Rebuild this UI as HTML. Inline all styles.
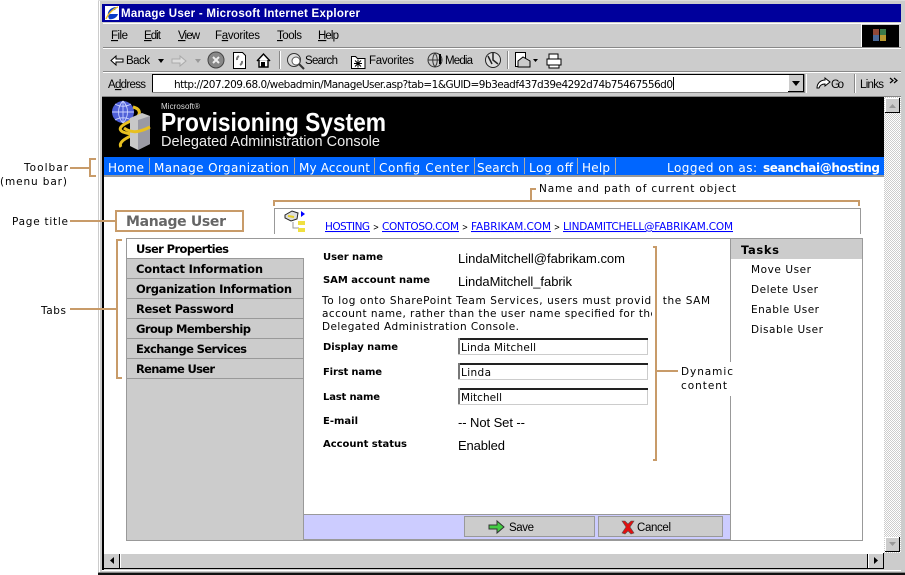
<!DOCTYPE html>
<html><head><meta charset="utf-8"><title>Manage User - Microsoft Internet Explorer</title>
<style>
html,body{margin:0;padding:0;background:#fff;width:905px;height:575px;overflow:hidden}
svg{display:block}
text{white-space:pre}
.l{font-family:"Liberation Sans",sans-serif;font-size:11.5px;fill:#000}
.d{font-family:"DejaVu Sans",sans-serif;font-size:10.5px;fill:#000}
.b{font-family:"DejaVu Sans",sans-serif;font-size:11.5px;font-weight:bold;fill:#000}
.s{font-family:"DejaVu Sans",sans-serif;font-size:10px;font-weight:bold;fill:#000}
.v{font-family:"Liberation Sans",sans-serif;font-size:13px;fill:#000}
.m{font-family:"DejaVu Sans",sans-serif;font-size:12px;fill:#fff}
.a{font-family:"DejaVu Sans",sans-serif;font-size:10.5px;fill:#00f;text-decoration:underline}
.r{shape-rendering:crispEdges}
</style></head><body>
<svg width="905" height="575" viewBox="0 0 905 575" xmlns="http://www.w3.org/2000/svg">
<defs><pattern id="dith" width="2" height="2" patternUnits="userSpaceOnUse"><rect width="2" height="2" fill="#fff"/><rect width="1" height="1" fill="#ccc"/><rect x="1" y="1" width="1" height="1" fill="#ccc"/></pattern></defs>
<g class="r">
<rect x="98" y="0" width="807" height="575" fill="#ccc"/>
<rect x="98" y="0" width="807" height="1" fill="#ddd"/>
<rect x="99" y="1" width="1" height="572" fill="#fff"/>
<rect x="102" y="4" width="799" height="18" fill="#00009c"/>
<rect x="103" y="23" width="798" height="1" fill="#fff"/>
<rect x="103" y="47" width="798" height="1" fill="#888"/><rect x="103" y="48" width="798" height="1" fill="#fff"/>
<rect x="103" y="71" width="798" height="1" fill="#888"/><rect x="103" y="72" width="798" height="1" fill="#fff"/>
<rect x="861" y="24" width="1" height="23" fill="#fff"/>
<rect x="862" y="25" width="37" height="22" fill="#000"/>
<rect x="279" y="51" width="1" height="18" fill="#888"/><rect x="280" y="51" width="1" height="18" fill="#fff"/>
<rect x="507" y="51" width="1" height="18" fill="#888"/><rect x="508" y="51" width="1" height="18" fill="#fff"/>
<rect x="152" y="74" width="653" height="19" fill="#fff"/>
<rect x="152" y="74" width="653" height="1" fill="#000"/><rect x="152" y="74" width="1" height="19" fill="#000"/>
<rect x="804" y="74" width="1" height="19" fill="#888"/><rect x="152" y="92" width="653" height="1" fill="#888"/>
<rect x="788" y="75" width="16" height="17" fill="#ccc"/><rect x="788" y="75" width="1" height="17" fill="#fff"/><rect x="803" y="75" width="1" height="17" fill="#000"/><rect x="788" y="91" width="16" height="1" fill="#000"/>
<rect x="673" y="77" width="1" height="13" fill="#000"/>
<rect x="806" y="74" width="1" height="19" fill="#fff"/><rect x="854" y="74" width="1" height="19" fill="#888"/><rect x="855" y="74" width="1" height="19" fill="#fff"/>
<rect x="102" y="96" width="799" height="1" fill="#888"/>
<rect x="102" y="97" width="2" height="473" fill="#000"/>
<rect x="102" y="97" width="782" height="60" fill="#000"/>
<rect x="104" y="157" width="780" height="18" fill="#0066ff"/>
<rect x="104" y="175" width="780" height="2" fill="#999"/>
<rect x="104" y="177" width="780" height="376" fill="#fff"/>
</g>
<g class="r" fill="#aaa">
<rect x="149" y="158" width="1" height="16"/><rect x="294" y="158" width="1" height="16"/><rect x="374" y="158" width="1" height="16"/><rect x="474" y="158" width="1" height="16"/><rect x="524" y="158" width="1" height="16"/><rect x="577" y="158" width="1" height="16"/><rect x="615" y="158" width="1" height="16"/>
</g>
<!-- Title bar -->
<rect x="105" y="6" width="14" height="14" fill="#fff" class="r"/>
<path d="M108 16c-1-5 3-9 9-9l-2 3c-3 0-5 2-5 4h8c-1 4-6 6-9 5z" fill="#0a3cc8"/>
<path d="M106 19c2-5 7-10 12-12" stroke="#f0c020" stroke-width="1.4" fill="none"/>
<text class="l" x="121" y="17" style="font-weight:bold;fill:#fff;font-size:11.5px" textLength="239" lengthAdjust="spacing">Manage User - Microsoft Internet Explorer</text>
<!-- menu -->
<text class="l" x="111" y="39" textLength="17"><tspan text-decoration="underline">F</tspan>ile</text>
<text class="l" x="144" y="39" textLength="17"><tspan text-decoration="underline">E</tspan>dit</text>
<text class="l" x="178" y="39" textLength="22"><tspan text-decoration="underline">V</tspan>iew</text>
<text class="l" x="215" y="39" textLength="45">F<tspan text-decoration="underline">a</tspan>vorites</text>
<text class="l" x="277" y="39" textLength="25"><tspan text-decoration="underline">T</tspan>ools</text>
<text class="l" x="318" y="39" textLength="21"><tspan text-decoration="underline">H</tspan>elp</text>
<!-- win logo -->
<g class="r"><rect x="873" y="29" width="6" height="6" fill="#904838"/><rect x="880" y="29" width="6" height="6" fill="#3a7a4a"/><rect x="873" y="35" width="6" height="6" fill="#4a6898"/><rect x="880" y="35" width="6" height="6" fill="#b89830"/></g>
<!-- toolbar icons -->
<path d="M111 60.500l5-4.500v3h7v3h-7v3z" fill="#fff" stroke="#000"/>
<text class="l" x="126" y="64" textLength="24">Back</text>
<path d="M158 59h6l-3 4z" fill="#000"/>
<path d="M172 59h8v-3l6 5-6 5v-3h-8z" fill="#ddd" stroke="#aaa"/>
<path d="M195 59h6l-3 4z" fill="#999"/>
<circle cx="216" cy="60" r="8" fill="#888" stroke="#444"/>
<path d="M213 57l6 6m0-6l-6 6" stroke="#eee" stroke-width="2"/>
<path d="M233.500 52.500h9l3 3v13h-12z" fill="#fff" stroke="#000"/>
<path d="M239 56a4 4 0 0 0-2 4m3 5a4 4 0 0 0 2-4" stroke="#777" stroke-width="2" fill="none"/>
<path d="M257 61l6.500-7 6.500 7m-11-1v7h9v-7" fill="#fff" stroke="#000" stroke-width="1.400"/>
<rect x="261" y="62" width="4" height="5" fill="#000"/>
<circle cx="294" cy="60" r="6.500" fill="#ddd" stroke="#333"/><circle cx="296" cy="61" r="4" fill="#fff" stroke="#555"/><path d="M299 64l5 5" stroke="#333" stroke-width="2"/>
<text class="l" x="305" y="64" textLength="33">Search</text>
<path d="M351.500 56.500h4l2 2h7.500v10h-13.500z" fill="#fff" stroke="#000"/><path d="M354 63.500h8m-4-4v8m-3-7l6 6m0-6l-6 6" stroke="#000"/>
<text class="l" x="369" y="64" textLength="45">Favorites</text>
<circle cx="435" cy="60" r="7" fill="#ccc" stroke="#333"/><path d="M428 60h14M435 53c-3 4-3 10 0 14m0-14c3 4 3 10 0 14" stroke="#333" fill="none"/><path d="M440 54v10" stroke="#000" stroke-width="2"/>
<text class="l" x="445" y="64" textLength="28">Media</text>
<circle cx="493" cy="60" r="7.500" fill="#ddd" stroke="#222"/><path d="M493 53v7l5 4M488 56l4 8" stroke="#222" stroke-width="1.500" fill="none"/>
<path d="M515.500 52.500h10v14h-10z" fill="#fff" stroke="#000"/><path d="M518 61l5-4 7 4v6h-12z" fill="#ccc" stroke="#000"/><path d="M533 59h5l-2.500 3z" fill="#000"/>
<path d="M549 59v-5h9v5M547 59h14v6h-14zM549 65h10v3h-10z" fill="#fff" stroke="#000"/>
<text class="l" x="108" y="88" textLength="38">A<tspan text-decoration="underline">d</tspan>dress</text>
<text class="d" x="174" y="88" style="font-size:10.500px" textLength="499" lengthAdjust="spacing">http://207.209.68.0/webadmin/ManageUser.asp?tab=1&amp;GUID=9b3eadf437d39e4292d74b75467556d0</text>
<path d="M792 81h8l-4 5z" fill="#000"/>
<path d="M817 88c0-5 4-8 8-8v-2l5 4-5 4v-2c-3 0-5 1-6 4z" fill="#fff" stroke="#000"/>
<text class="l" x="831" y="88" textLength="13">Go</text>
<text class="l" x="860" y="88" textLength="24">Links</text>
<path d="M890 78l3 2.500-3 2.500m4-5l3 2.500-3 2.500" stroke="#000" fill="none" stroke-width="1.200"/>
<!-- logo -->
<circle cx="123" cy="112" r="11" fill="#5060d8"/>
<path d="M112 112h22M123 101v22M115 104c5 3 11 3 16 0M115 120c5-3 11-3 16 0M123 101c-6 6-6 16 0 22M123 101c6 6 6 16 0 22" stroke="#c8d0ff" fill="none" stroke-width=".9"/>
<path d="M133 107c8 2 9 8 0 13-12 5-16 9-10 12 8 3 14 2 18 0-9 3-24 9-20 15" stroke="#e8c020" stroke-width="3" fill="none"/>
<path d="M130 118l12-5 8 3v28l-12 6-8-4z" fill="#c8c8c8"/><path d="M138 120l12-4v28l-12 6z" fill="#9a9aa4"/>
<path d="M124 128c8 6 16 4 26-1" stroke="#e8c020" stroke-width="3" fill="none"/>
<text x="161" y="109" style="font-family:'Liberation Sans',sans-serif;font-size:8px;fill:#ddd" textLength="39">Microsoft®</text>
<text x="161" y="131" style="font-family:'Liberation Sans',sans-serif;font-size:26px;font-weight:bold;fill:#fff" textLength="225" lengthAdjust="spacingAndGlyphs">Provisioning System</text>
<text x="161" y="146" style="font-family:'Liberation Sans',sans-serif;font-size:15px;fill:#eee" textLength="219" lengthAdjust="spacingAndGlyphs">Delegated Administration Console</text>
<!-- nav -->
<text class="m" x="108" y="172" textLength="36">Home</text>
<text class="m" x="154" y="172" textLength="135">Manage Organization</text>
<text class="m" x="299" y="172" textLength="71">My Account</text>
<text class="m" x="379" y="172" textLength="90">Config Center</text>
<text class="m" x="477" y="172" textLength="42">Search</text>
<text class="m" x="529" y="172" textLength="44">Log off</text>
<text class="m" x="582" y="172" textLength="28">Help</text>
<text class="m" x="667" y="172" textLength="90">Logged on as:</text>
<text class="m" x="763" y="172" style="font-weight:bold" textLength="117">seanchai@hosting</text>
<!-- annotations -->
<g class="r" fill="#c89b69">
<rect x="70" y="167" width="20" height="2"/><rect x="89" y="158" width="2" height="19"/><rect x="89" y="158" width="7" height="2"/><rect x="89" y="175" width="7" height="2"/>
<rect x="70" y="220" width="46" height="2"/>
<rect x="115" y="210" width="129" height="2"/><rect x="115" y="230" width="129" height="2"/><rect x="115" y="210" width="2" height="22"/><rect x="242" y="210" width="2" height="22"/>
<rect x="70" y="308" width="47" height="2"/><rect x="116" y="239" width="2" height="140"/><rect x="116" y="239" width="6" height="2"/><rect x="116" y="377" width="6" height="2"/>
<rect x="273" y="200" width="587" height="2"/><rect x="273" y="200" width="2" height="6"/><rect x="858" y="200" width="2" height="6"/><rect x="530" y="188" width="2" height="13"/><rect x="530" y="188" width="6" height="2"/>
</g>
<text class="d" x="24" y="171" textLength="44">Toolbar</text>
<text class="d" x="0" y="185" textLength="67">(menu bar)</text>
<text class="d" x="12" y="225" textLength="56">Page title</text>
<text class="d" x="41" y="314" textLength="25">Tabs</text>
<text class="d" x="539" y="192" textLength="197">Name and path of current object</text>
<text x="126" y="226" style="font-family:'DejaVu Sans',sans-serif;font-size:14px;font-weight:bold;fill:#666" textLength="100">Manage User</text>
<!-- breadcrumb -->
<g class="r" fill="#999"><rect x="274" y="208" width="587" height="1"/><rect x="274" y="208" width="1" height="26"/><rect x="860" y="208" width="1" height="26"/></g>
<path d="M285 215l7-4 6 2-1 6-6 2-6-3z" fill="#ddd" stroke="#222"/><path d="M288 216l6 1" stroke="#e8d020" stroke-width="2"/>
<path d="M301 211l4 3-4 3z" fill="#00f"/><path d="M293 222v6h6m-6-6h0" stroke="#999" fill="none"/>
<rect x="298" y="221" width="7" height="4" fill="#f0e040" class="r"/><rect x="298" y="228" width="7" height="4" fill="#f0e040" class="r"/>
<text class="a" x="325" y="230" textLength="45">HOSTING</text>
<text class="d" x="373" y="230" style="font-size:9px" textLength="6" lengthAdjust="spacingAndGlyphs">&gt;</text>
<text class="a" x="382" y="230" textLength="77">CONTOSO.COM</text>
<text class="d" x="462" y="230" style="font-size:9px" textLength="6" lengthAdjust="spacingAndGlyphs">&gt;</text>
<text class="a" x="471" y="230" textLength="80">FABRIKAM.COM</text>
<text class="d" x="554" y="230" style="font-size:9px" textLength="6" lengthAdjust="spacingAndGlyphs">&gt;</text>
<text class="a" x="563" y="230" textLength="170">LINDAMITCHELL@FABRIKAM.COM</text>
<!-- main panel -->
<g class="r">
<rect x="126" y="238" width="737" height="303" fill="#999"/>
<rect x="127" y="239" width="735" height="301" fill="#fff"/>
<rect x="127" y="239" width="177" height="301" fill="#ccc"/>
<rect x="127" y="239" width="177" height="19" fill="#fff"/>
<rect x="127" y="258" width="177" height="1" fill="#999"/><rect x="127" y="278" width="177" height="1" fill="#999"/><rect x="127" y="298" width="177" height="1" fill="#999"/><rect x="127" y="318" width="177" height="1" fill="#999"/><rect x="127" y="338" width="177" height="1" fill="#999"/><rect x="127" y="358" width="177" height="1" fill="#999"/><rect x="127" y="378" width="177" height="1" fill="#999"/>
<rect x="303" y="258" width="1" height="282" fill="#999"/>
<rect x="730" y="239" width="1" height="301" fill="#999"/>
<rect x="731" y="239" width="131" height="20" fill="#ccc"/>
<rect x="304" y="514" width="427" height="26" fill="#999"/>
<rect x="304" y="515" width="426" height="24" fill="#ccf"/>
<rect x="464" y="516" width="131" height="21" fill="#999"/><rect x="465" y="517" width="129" height="19" fill="#ccc"/>
<rect x="598" y="516" width="125" height="21" fill="#999"/><rect x="599" y="517" width="123" height="19" fill="#ccc"/>
</g>
<text class="b" x="136" y="253" textLength="93">User Properties</text>
<text class="b" x="136" y="273" textLength="127">Contact Information</text>
<text class="b" x="136" y="293" textLength="156">Organization Information</text>
<text class="b" x="136" y="313" textLength="98">Reset Password</text>
<text class="b" x="136" y="333" textLength="115">Group Membership</text>
<text class="b" x="136" y="353" textLength="111">Exchange Services</text>
<text class="b" x="136" y="373" textLength="79">Rename User</text>
<!-- content -->
<text class="s" x="323" y="260" textLength="60">User name</text>
<text class="s" x="323" y="283" textLength="107">SAM account name</text>
<text class="s" x="323" y="350" textLength="75">Display name</text>
<text class="s" x="323" y="375" textLength="59">First name</text>
<text class="s" x="323" y="400" textLength="57">Last name</text>
<text class="s" x="323" y="424" textLength="35">E-mail</text>
<text class="s" x="323" y="447" textLength="84">Account status</text>
<text class="v" x="458" y="263" textLength="167">LindaMitchell@fabrikam.com</text>
<text class="v" x="458" y="286" textLength="114">LindaMitchell_fabrik</text>
<text class="v" x="458" y="427" textLength="67">-- Not Set --</text>
<text class="v" x="458" y="450" textLength="47">Enabled</text>
<text class="d" x="322" y="304" textLength="388">To log onto SharePoint Team Services, users must provide the SAM</text>
<text class="d" x="322" y="317" textLength="335">account name, rather than the user name specified for the</text>
<text class="d" x="322" y="330" textLength="197">Delegated Administration Console.</text>
<rect x="652" y="244" width="11" height="218" fill="#fff" class="r"/>
<g class="r">
<rect x="458" y="338" width="190" height="17" fill="#ccc"/><rect x="460" y="340" width="187" height="14" fill="#fff"/><rect x="458" y="338" width="190" height="2" fill="#222"/><rect x="458" y="338" width="2" height="16" fill="#777"/>
<rect x="458" y="363" width="190" height="17" fill="#ccc"/><rect x="460" y="365" width="187" height="14" fill="#fff"/><rect x="458" y="363" width="190" height="2" fill="#222"/><rect x="458" y="363" width="2" height="16" fill="#777"/>
<rect x="458" y="388" width="190" height="17" fill="#ccc"/><rect x="460" y="390" width="187" height="14" fill="#fff"/><rect x="458" y="388" width="190" height="2" fill="#222"/><rect x="458" y="388" width="2" height="16" fill="#777"/>
</g>
<text class="d" x="461" y="351" textLength="75">Linda Mitchell</text>
<text class="d" x="461" y="376" textLength="30">Linda</text>
<text class="d" x="461" y="401" textLength="41">Mitchell</text>
<g class="r" fill="#c89b69"><rect x="655" y="246" width="2" height="215"/><rect x="653" y="246" width="4" height="2"/><rect x="653" y="459" width="4" height="2"/><rect x="657" y="370" width="21" height="2"/></g>
<rect x="678" y="362" width="56" height="34" fill="#fff" class="r"/>
<text class="d" x="681" y="375" textLength="52">Dynamic</text>
<text class="d" x="681" y="389" textLength="46">content</text>
<!-- tasks -->
<text class="b" x="741" y="254" textLength="38">Tasks</text>
<text class="d" x="751" y="273" textLength="60">Move User</text>
<text class="d" x="751" y="293" textLength="67">Delete User</text>
<text class="d" x="751" y="313" textLength="68">Enable User</text>
<text class="d" x="751" y="333" textLength="72">Disable User</text>
<!-- buttons -->
<path d="M489 525h8v-4l7 6-7 6v-4h-8z" fill="#44cc44" stroke="#333"/>
<text class="l" x="509" y="531" textLength="25">Save</text>
<path d="M622 521l3 0 3 3 3-3 3 0-4 6 4 6-3 1-3-3-3 3-3-1 4-6z" fill="#e01010" stroke="#555" stroke-width=".6"/>
<text class="l" x="637" y="531" textLength="34">Cancel</text>
<!-- scrollbars -->
<g class="r">
<rect x="884" y="97" width="17" height="456" fill="url(#dith)"/>
<rect x="885" y="98" width="15" height="15" fill="#ccc"/><rect x="885" y="98" width="15" height="1" fill="#fff"/><rect x="885" y="98" width="1" height="15" fill="#fff"/><rect x="899" y="98" width="1" height="15" fill="#000"/><rect x="885" y="112" width="15" height="1" fill="#000"/>
<rect x="885" y="537" width="15" height="15" fill="#ccc"/><rect x="885" y="537" width="15" height="1" fill="#fff"/><rect x="885" y="537" width="1" height="15" fill="#fff"/><rect x="899" y="537" width="1" height="15" fill="#000"/><rect x="885" y="551" width="15" height="1" fill="#000"/>
<rect x="104" y="553" width="780" height="16" fill="#ccc"/>
<rect x="104" y="553" width="780" height="1" fill="#fff"/><rect x="104" y="568" width="780" height="1" fill="#000"/>
<rect x="119" y="554" width="1" height="14" fill="#000"/><rect x="120" y="554" width="1" height="14" fill="#fff"/>
<rect x="867" y="554" width="1" height="14" fill="#000"/><rect x="868" y="554" width="1" height="14" fill="#fff"/><rect x="883" y="553" width="1" height="16" fill="#000"/>
<rect x="98" y="572" width="807" height="1" fill="#888"/><rect x="98" y="573" width="807" height="2" fill="#111"/>
<rect x="102" y="570" width="799" height="1" fill="#fff"/>
</g>
<path d="M889 108h7l-3.500-4z" fill="#999"/><path d="M889 542h7l-3.500 4z" fill="#999"/>
<path d="M114 557v7l-4-3.500z" fill="#000"/><path d="M874 557v7l4-3.500z" fill="#000"/>
</svg>
</body></html>
